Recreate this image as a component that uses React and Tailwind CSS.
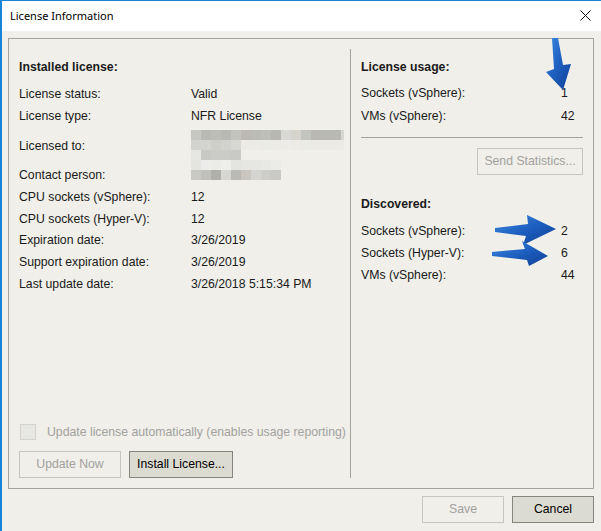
import React from 'react';

const font = { fontFamily: '"Liberation Sans", Arial, sans-serif' };

const blurRows = [
  ['#c6c6c2', '#b9b9b5', '#bcbcb8', '#b8b8b4', '#c4c4bf', '#bcb9b4', '#bbbcb8', '#bebeba', '#b8b8b3', '#d8d8d4', '#d4d4cc', '#c2c4c0', '#b9b8b4', '#b8b8b4', '#b8b8b4', '#d6d6d2'],
  ['#d2d2ce', '#d4d4d0', '#cfcfca', '#d2d2cf', '#d7d7d3', '#ecebe6', '#ecebe6', '#ebebe6', '#ecebe6', '#edece8', '#ecebe6', '#ebebe6', '#ebeae5', '#ebeae5', '#ebeae5', '#ecebe6'],
  ['#e6e6e2', '#c8c8c4', '#cbcbc7', '#cbcbc7', '#c9c9c5'],
  ['#e5e5e0', '#ececea', '#ebebe7', '#eeeeea', '#e4e4e0', '#e6e6e2', '#e6e6e2', '#e8e8e4', '#ebebe7'],
  ['#c8c8c4', '#c0c0bc', '#b0b0ab', '#d6d6d2', '#b9b9b5', '#c9c6c0', '#d4d4d0', '#cdcdc9', '#c9c9c5'],
];

function Row({ label, value, h = 'h-[22px]' }) {
  return (
    <div className={`flex items-center ${h}`}>
      <div className="w-[172px] shrink-0">{label}</div>
      <div>{value}</div>
    </div>
  );
}

function RightRow({ label, value, h = 'h-[22px]' }) {
  return (
    <div className={`flex items-center ${h}`}>
      <div className="w-[200px] shrink-0">{label}</div>
      <div>{value}</div>
    </div>
  );
}

function Arrows() {
  return (
    <svg className="absolute left-0 top-0 pointer-events-none" width="601" height="531">
      <defs>
        <linearGradient id="ar" x1="0" y1="0" x2="1" y2="1">
          <stop offset="0" stopColor="#3f8ae0" />
          <stop offset="0.5" stopColor="#1d5fc0" />
          <stop offset="1" stopColor="#0f3f96" />
        </linearGradient>
      </defs>
      <polygon points="550,37 556,37 561,64 569,63 561,89 544,71 552,68" fill="url(#ar)" />
      <polygon points="493,227 526,223 525,214 554,228 521,244 524,235 493,231" fill="url(#ar)" />
      <polygon points="490,251 523,248 520,240 546,255 527,265 525,259 490,255" fill="url(#ar)" />
    </svg>
  );
}

export default function App() {
  return (
    <div
      className="relative w-[601px] h-[531px] overflow-hidden bg-[#f0efe9] border-t border-l-2 border-[#1883d7] text-[12.25px] text-[#1a1a1a]"
      style={font}
    >
      <div className="h-[30px] bg-white flex items-center justify-between pl-[8px] pr-[10px]">
        <div className="text-[11px] text-black" style={{ fontFamily: '"Noto Sans", "Liberation Sans", sans-serif' }}>
          License Information
        </div>
        <svg width="11" height="11" viewBox="0 0 11 11" className="mt-[-1px]">
          <path d="M0.5 0.5 L10.5 10.5 M10.5 0.5 L0.5 10.5" stroke="#111" strokeWidth="1" />
        </svg>
      </div>

      <div className="ml-[6px] mr-[7px] mt-[7px] h-[451px] border border-[#a3a39d] flex pt-[10px] pb-[10px]">
        <div className="w-[341px] shrink-0 pl-[10px] pt-[7px] flex flex-col">
          <div className="h-[22px] flex items-center font-bold">Installed license:</div>
          <div className="mt-[5px]">
            <Row label="License status:" value="Valid" />
            <Row label="License type:" value="NFR License" />
            <div className="flex">
              <div className="w-[172px] shrink-0">
                <div className="h-[38px] flex items-center">Licensed to:</div>
                <div className="h-[20px] flex items-center">Contact person:</div>
              </div>
              <div className="pt-[3px]">
                {blurRows.map((r, i) => (
                  <div key={i} className="flex h-[10px]">
                    {r.map((c, j) => (
                      <div key={j} className={j === 15 ? 'w-[3px] h-[10px]' : 'w-[10px] h-[10px]'} style={{ background: c }} />
                    ))}
                  </div>
                ))}
              </div>
            </div>
            <Row label="CPU sockets (vSphere):" value="12" h="h-[24px]" />
            <Row label="CPU sockets (Hyper-V):" value="12" h="h-[20px]" />
            <Row label="Expiration date:" value="3/26/2019" />
            <Row label="Support expiration date:" value="3/26/2019" />
            <Row label="Last update date:" value="3/26/2018 5:15:34 PM" />
          </div>

          <div className="mt-auto">
            <div className="flex items-center h-[16px]">
              <div className="ml-[1px] w-[16px] h-[16px] bg-[#e6e6e3] border border-[#d2d2ce]" />
              <div className="ml-[11px] text-[#a2a29e]">Update license automatically (enables usage reporting)</div>
            </div>
            <div className="flex gap-[8px] mt-[11px]">
              <div className="w-[102px] h-[27px] border border-[#c6c6c1] flex items-center justify-center text-[#a2a29e]">
                Update Now
              </div>
              <div className="w-[104px] h-[27px] border border-[#85857f] bg-[#dcdbd1] flex items-center justify-center text-black">
                Install License...
              </div>
            </div>
          </div>
        </div>

        <div className="w-px bg-[#a3a39d] shrink-0" />

        <div className="flex-1 pl-[10px] pr-[10px] pt-[7px]">
          <div className="h-[22px] flex items-center font-bold">License usage:</div>
          <div className="mt-[4px]">
            <RightRow label="Sockets (vSphere):" value="1" h="h-[23px]" />
            <RightRow label="VMs (vSphere):" value="42" h="h-[23px]" />
          </div>
          <div className="mt-[9px] h-px bg-[#a3a39d]" />
          <div className="flex justify-end mt-[10px]">
            <div className="w-[106px] h-[27px] border border-[#c6c6c1] flex items-center justify-center text-[#a2a29e]">
              Send Statistics...
            </div>
          </div>
          <div className="mt-[18px] h-[22px] flex items-center font-bold">Discovered:</div>
          <div className="mt-[5px]">
            <RightRow label="Sockets (vSphere):" value="2" />
            <RightRow label="Sockets (Hyper-V):" value="6" />
            <RightRow label="VMs (vSphere):" value="44" />
          </div>
        </div>
      </div>

      <div className="flex justify-end gap-[8px] mr-[7px] mt-[7px]">
        <div className="w-[82px] h-[27px] border border-[#c6c6c1] flex items-center justify-center text-[#a2a29e]">
          Save
        </div>
        <div className="w-[82px] h-[27px] border border-[#85857f] bg-[#dcdbd1] flex items-center justify-center text-black">
          Cancel
        </div>
      </div>

      <Arrows />
    </div>
  );
}
